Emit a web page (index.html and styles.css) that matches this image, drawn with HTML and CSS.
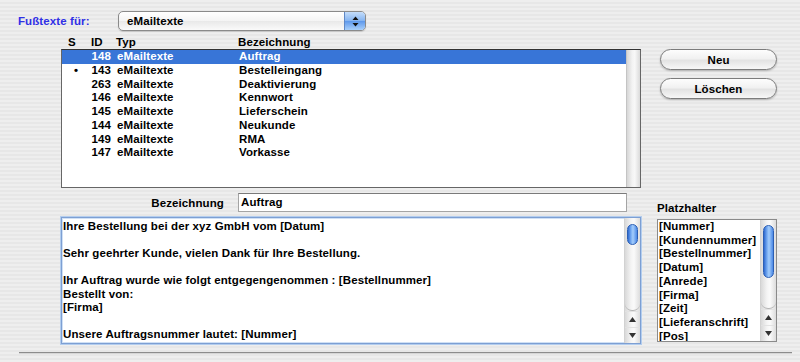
FILE: index.html
```html
<!DOCTYPE html>
<html lang="de">
<head>
  <meta charset="UTF-8">
  <meta name="viewport" content="width=device-width, initial-scale=1.0">
  <title>Fußtexte</title>
  <link rel="stylesheet" href="styles.css">
</head>
<body>
  <!-- Auswahl der Textgruppe -->
  <div class="topbar">
    <span class="for-label">Fußtexte für:</span>
    <div class="popup">
      <span class="popup-value">eMailtexte</span>
      <span class="popup-arrows">
        <svg width="7" height="11" viewBox="0 0 7 11"><path d="M3.5 0.5 L6.5 4 L0.5 4 Z M3.5 10.5 L6.5 7 L0.5 7 Z" fill="#111"/></svg>
      </span>
    </div>
  </div>

  <!-- Liste der Texte -->
  <div class="upper">
    <div>
      <div class="cols list-head">
        <span class="c-s">S</span>
        <span class="c-idh">ID</span>
        <span class="c-typ">Typ</span>
        <span>Bezeichnung</span>
      </div>
      <div class="listbox">
        <div class="rows">
          <div class="cols row selected"><span class="c-s"></span><span class="c-id">148</span><span class="c-typ">eMailtexte</span><span>Auftrag</span></div>
          <div class="cols row"><span class="c-s">•</span><span class="c-id">143</span><span class="c-typ">eMailtexte</span><span>Bestelleingang</span></div>
          <div class="cols row"><span class="c-s"></span><span class="c-id">263</span><span class="c-typ">eMailtexte</span><span>Deaktivierung</span></div>
          <div class="cols row"><span class="c-s"></span><span class="c-id">146</span><span class="c-typ">eMailtexte</span><span>Kennwort</span></div>
          <div class="cols row"><span class="c-s"></span><span class="c-id">145</span><span class="c-typ">eMailtexte</span><span>Lieferschein</span></div>
          <div class="cols row"><span class="c-s"></span><span class="c-id">144</span><span class="c-typ">eMailtexte</span><span>Neukunde</span></div>
          <div class="cols row"><span class="c-s"></span><span class="c-id">149</span><span class="c-typ">eMailtexte</span><span>RMA</span></div>
          <div class="cols row"><span class="c-s"></span><span class="c-id">147</span><span class="c-typ">eMailtexte</span><span>Vorkasse</span></div>
        </div>
        <div class="scroll-empty"></div>
      </div>
    </div>
    <div class="buttons">
      <button class="aqua-btn">Neu</button>
      <button class="aqua-btn">Löschen</button>
    </div>
  </div>

  <!-- Bearbeitung -->
  <div class="lower">
    <div class="editor">
      <div class="name-row">
        <span class="name-label">Bezeichnung</span>
        <div class="field">Auftrag</div>
      </div>
      <div class="textarea">
        <div class="text">Ihre Bestellung bei der xyz GmbH vom [Datum]

Sehr geehrter Kunde, vielen Dank für Ihre Bestellung.

Ihr Auftrag wurde wie folgt entgegengenommen : [Bestellnummer]
Bestellt von:
[Firma]

Unsere Auftragsnummer lautet: [Nummer]</div>
        <div class="vscroll">
          <div class="track"><div class="thumb small"></div></div>
          <div class="arrow"><svg width="7" height="5" viewBox="0 0 7 5"><path d="M3.5 0 L7 5 L0 5 Z" fill="#333"/></svg></div>
          <div class="arrow"><svg width="7" height="5" viewBox="0 0 7 5"><path d="M0 0 L7 0 L3.5 5 Z" fill="#333"/></svg></div>
        </div>
      </div>
    </div>
    <div class="placeholders">
      <div class="ph-label">Platzhalter</div>
      <div class="ph-box">
        <div class="ph-list">
          <div>[Nummer]</div>
          <div>[Kundennummer]</div>
          <div>[Bestellnummer]</div>
          <div>[Datum]</div>
          <div>[Anrede]</div>
          <div>[Firma]</div>
          <div>[Zeit]</div>
          <div>[Lieferanschrift]</div>
          <div>[Pos]</div>
        </div>
        <div class="vscroll">
          <div class="track"><div class="thumb large"></div></div>
          <div class="arrow"><svg width="7" height="5" viewBox="0 0 7 5"><path d="M3.5 0 L7 5 L0 5 Z" fill="#333"/></svg></div>
          <div class="arrow"><svg width="7" height="5" viewBox="0 0 7 5"><path d="M0 0 L7 0 L3.5 5 Z" fill="#333"/></svg></div>
        </div>
      </div>
    </div>
  </div>

  <div class="sep"></div>
</body>
</html>
```

FILE: styles.css
```css
body {
  margin: 0;
  height: 362px;
  overflow: hidden;
  font-family: "Liberation Sans", Arial, sans-serif;
  font-size: 11.5px;
  font-weight: bold;
  letter-spacing: 0.1px;
  color: #000;
  background: repeating-linear-gradient(to bottom, #eeeeee 0, #eeeeee 2px, #e7e7e7 2px, #e7e7e7 4px);
}

/* top popup */
.topbar {
  display: flex;
  align-items: center;
  height: 20px;
  padding: 11px 0 0 18px;
}
.for-label {
  width: 100px;
  color: #3030e6;
}
.popup {
  display: flex;
  align-items: center;
  width: 248px;
  height: 20px;
  box-sizing: border-box;
  border: 1px solid #8a8a8a;
  border-radius: 5px;
  overflow: hidden;
  background: linear-gradient(#ffffff, #f4f4f4 50%, #e9e9e9 52%, #fafafa);
  box-shadow: 0 1px 1px rgba(0, 0, 0, 0.15);
}
.popup-value {
  flex: 1;
  padding-left: 8px;
}
.popup-arrows {
  display: flex;
  align-items: center;
  justify-content: center;
  width: 20px;
  height: 100%;
  border-left: 1px solid #5f88c6;
  background: linear-gradient(#c4ddfb, #86b5f1 48%, #5f99ec 52%, #a9d0fb);
}

/* list */
.upper {
  display: grid;
  grid-template-columns: 580px 117px;
  column-gap: 19px;
  margin: 4px 0 0 61px;
}
.cols {
  display: grid;
  grid-template-columns: 24px 25px 128px 1fr;
}
.list-head {
  height: 14px;
  line-height: 14px;
}
.c-s {
  padding-left: 7px;
}
.row .c-s {
  padding-left: 12px;
}
.c-idh {
  padding-left: 6px;
}
.c-id {
  text-align: right;
}
.c-typ {
  padding-left: 6px;
}
.listbox {
  display: flex;
  height: 139px;
  box-sizing: border-box;
  border: 1px solid #666;
  border-top-color: #333;
  background: #fff;
}
.rows {
  flex: 1;
}
.row {
  height: 13.75px;
  line-height: 13.75px;
  white-space: nowrap;
}
.selected {
  background: #3875d7;
  color: #fff;
}
.scroll-empty {
  width: 13px;
  border-left: 1px solid #c4c4c4;
  background: linear-gradient(to right, #d6d6d6, #f3f3f3 40%, #f8f8f8 60%, #dadada);
}

/* buttons */
.buttons {
  display: flex;
  flex-direction: column;
  gap: 8px;
  padding-top: 14px;
}
.aqua-btn {
  height: 21px;
  padding: 0;
  border: 1px solid #7c7c7c;
  border-radius: 11px;
  font: inherit;
  letter-spacing: inherit;
  color: #000;
  background: linear-gradient(#fdfdfd, #f1f1f1 45%, #e3e3e3 55%, #f7f7f7);
  box-shadow: 0 1px 2px rgba(0, 0, 0, 0.25);
}

/* editor */
.lower {
  display: grid;
  grid-template-columns: 580px 120px;
  column-gap: 16px;
  margin: 5px 0 0 61px;
}
.name-row {
  display: grid;
  grid-template-columns: 163px 389px;
  column-gap: 14px;
  align-items: center;
  height: 19px;
  margin-bottom: 5px;
}
.name-label {
  text-align: right;
}
.field {
  height: 19px;
  box-sizing: border-box;
  padding-left: 2px;
  line-height: 17px;
  border: 1px solid #a4a4a4;
  border-top-color: #7a7a7a;
  background: #fff;
}
.textarea {
  display: flex;
  height: 127px;
  box-sizing: border-box;
  border: 1px solid #7d9fd3;
  background: #fff;
  box-shadow: 0 0 0 1px #b3cdee, inset 0 0 0 1px #cfe0f5;
}
.text {
  flex: 1;
  padding: 2px 0 0 1px;
  line-height: 13.5px;
  white-space: pre;
  overflow: hidden;
}

/* scrollbars */
.vscroll {
  display: flex;
  flex-direction: column;
  width: 15px;
  border-left: 1px solid #d2d2d2;
  background: linear-gradient(to right, #d9d9d9, #f4f4f4 40%, #fafafa 60%, #dcdcdc);
}
.track {
  flex: 1;
  padding: 5px 2px 0;
  border-bottom-left-radius: 7px;
  border-bottom-right-radius: 7px;
  border-bottom: 1px solid #b5b5b5;
}
.thumb {
  border: 1px solid #2c5fb4;
  border-radius: 6px;
  background: linear-gradient(to right, #2f6ad0, #79aef3 35%, #a4cdfb 55%, #4a88e6);
}
.thumb.small {
  height: 19px;
  margin-top: 1px;
}
.thumb.large {
  height: 51px;
}
.arrow {
  display: flex;
  align-items: center;
  justify-content: center;
  height: 15px;
  border-top: 1px solid #e2e2e2;
}

/* placeholders */
.placeholders {
  display: flex;
  flex-direction: column;
  justify-content: flex-end;
  padding-bottom: 2px;
}
.ph-label {
  line-height: 13px;
  margin-bottom: 4px;
}
.ph-box {
  display: flex;
  height: 123px;
  box-sizing: border-box;
  border: 1px solid #8a8a8a;
  background: #fff;
}
.ph-list {
  flex: 1;
  padding-left: 1px;
  line-height: 13.7px;
  white-space: nowrap;
  overflow: hidden;
}

.sep {
  height: 1px;
  margin: 8px 8px 0 19px;
  background: #8c8c8c;
  border-bottom: 1px solid #d6d6d6;
}
```
